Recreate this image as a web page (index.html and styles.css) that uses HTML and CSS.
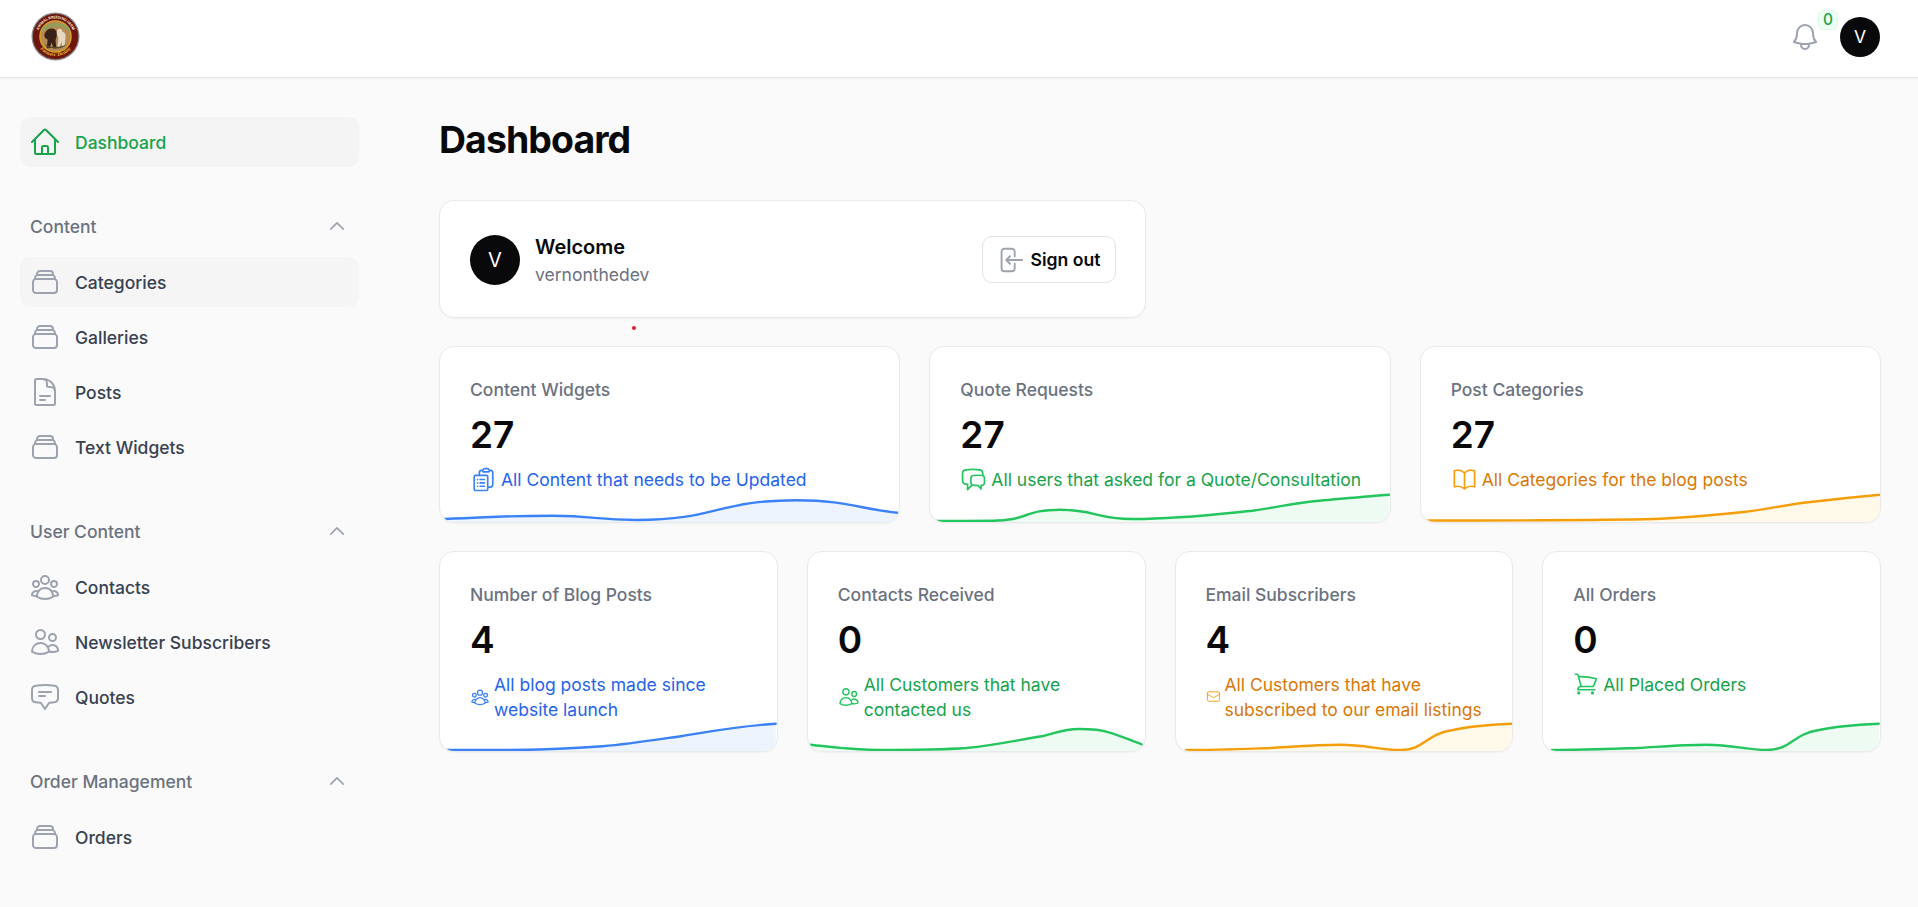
FILE: index.html
```html
<!DOCTYPE html>
<html lang="en">
<head>
<meta charset="utf-8" />
<meta name="viewport" content="width=device-width, initial-scale=1" />
<title>Dashboard</title>
<link rel="stylesheet" href="styles.css">
</head>
<body>
<svg class="sprite" aria-hidden="true">
<symbol id="i-home" viewBox="0 0 24 24"><path d="m2.25 12 8.954-8.955c.44-.439 1.152-.439 1.591 0L21.75 12M4.5 9.75v10.125c0 .621.504 1.125 1.125 1.125H9.75v-4.875c0-.621.504-1.125 1.125-1.125h2.25c.621 0 1.125.504 1.125 1.125V21h4.125c.621 0 1.125-.504 1.125-1.125V9.75M8.25 21h8.25"/></symbol>
<symbol id="i-stack" viewBox="0 0 24 24"><path d="M6 6.878V6a2.25 2.25 0 0 1 2.25-2.25h7.5A2.25 2.25 0 0 1 18 6v.878m-12 0c.235-.083.487-.128.75-.128h10.5c.263 0 .515.045.75.128m-12 0A2.25 2.25 0 0 0 4.5 9v.878m13.5-3A2.25 2.25 0 0 1 19.5 9v.878m0 0a2.246 2.246 0 0 0-.75-.128H5.25c-.263 0-.515.045-.75.128m15 0A2.25 2.25 0 0 1 21 12v6a2.25 2.25 0 0 1-2.25 2.25H5.25A2.25 2.25 0 0 1 3 18v-6c0-.98.626-1.813 1.5-2.122"/></symbol>
<symbol id="i-doc" viewBox="0 0 24 24"><path d="M19.5 14.25v-2.625a3.375 3.375 0 0 0-3.375-3.375h-1.5A1.125 1.125 0 0 1 13.5 7.125v-1.5a3.375 3.375 0 0 0-3.375-3.375H8.25m0 12.75h7.5m-7.5 3H12M10.5 2.25H5.625c-.621 0-1.125.504-1.125 1.125v17.25c0 .621.504 1.125 1.125 1.125h12.75c.621 0 1.125-.504 1.125-1.125V11.25a9 9 0 0 0-9-9Z"/></symbol>
<symbol id="i-group" viewBox="0 0 24 24"><path d="M18 18.72a9.094 9.094 0 0 0 3.741-.479 3 3 0 0 0-4.682-2.72m.94 3.198.001.031c0 .225-.012.447-.037.666A11.944 11.944 0 0 1 12 21c-2.17 0-4.207-.576-5.963-1.584A6.062 6.062 0 0 1 6 18.719m12 0a5.971 5.971 0 0 0-.941-3.197m0 0A5.995 5.995 0 0 0 12 12.75a5.995 5.995 0 0 0-5.058 2.772m0 0a3 3 0 0 0-4.681 2.72 8.986 8.986 0 0 0 3.74.477m.94-3.197a5.971 5.971 0 0 0-.94 3.197M15 6.75a3 3 0 1 1-6 0 3 3 0 0 1 6 0Zm6 3a2.25 2.25 0 1 1-4.5 0 2.25 2.25 0 0 1 4.5 0Zm-13.5 0a2.25 2.25 0 1 1-4.5 0 2.25 2.25 0 0 1 4.5 0Z"/></symbol>
<symbol id="i-users" viewBox="0 0 24 24"><path d="M15 19.128a9.38 9.38 0 0 0 2.625.372 9.337 9.337 0 0 0 4.121-.952 4.125 4.125 0 0 0-7.533-2.493M15 19.128v-.003c0-1.113-.285-2.16-.786-3.07M15 19.128v.106A12.318 12.318 0 0 1 8.624 21c-2.331 0-4.512-.645-6.374-1.766l-.001-.109a6.375 6.375 0 0 1 11.964-3.07M12 6.375a3.375 3.375 0 1 1-6.75 0 3.375 3.375 0 0 1 6.75 0Zm8.25 2.25a2.625 2.625 0 1 1-5.25 0 2.625 2.625 0 0 1 5.25 0Z"/></symbol>
<symbol id="i-quote" viewBox="0 0 24 24"><path d="M7.5 8.25h9m-9 3H12m-9.75 1.51c0 1.6 1.123 2.994 2.707 3.227 1.129.166 2.27.293 3.423.379.35.026.67.21.865.501L12 21l2.755-4.133a1.14 1.14 0 0 1 .865-.501 48.172 48.172 0 0 0 3.423-.379c1.584-.233 2.707-1.626 2.707-3.228V6.741c0-1.602-1.123-2.995-2.707-3.228A48.394 48.394 0 0 0 12 3c-2.392 0-4.744.175-7.043.513C3.373 3.746 2.25 5.14 2.25 6.741v6.018Z"/></symbol>
<symbol id="i-bell" viewBox="0 0 24 24"><path d="M14.857 17.082a23.848 23.848 0 0 0 5.454-1.31A8.967 8.967 0 0 1 18 9.75V9A6 6 0 0 0 6 9v.75a8.967 8.967 0 0 1-2.312 6.022c1.733.64 3.56 1.085 5.455 1.31m5.714 0a24.255 24.255 0 0 1-5.714 0m5.714 0a3 3 0 1 1-5.714 0"/></symbol>
<symbol id="i-signout" viewBox="0 0 24 24"><path d="M15.75 9V5.25A2.25 2.25 0 0 0 13.5 3h-6a2.25 2.25 0 0 0-2.25 2.25v13.5A2.25 2.25 0 0 0 7.5 21h6a2.25 2.25 0 0 0 2.25-2.25V15M12 9l-3 3m0 0 3 3m-3-3h12.75"/></symbol>
<symbol id="i-clipboard" viewBox="0 0 24 24"><path d="M9 12h3.75M9 15h3.75M9 18h3.75m3 .75H18a2.25 2.25 0 0 0 2.25-2.25V6.108c0-1.135-.845-2.098-1.976-2.192a48.424 48.424 0 0 0-1.123-.08m-5.801 0c-.065.21-.1.433-.1.664 0 .414.336.75.75.75h4.5a.75.75 0 0 0 .75-.75 2.25 2.25 0 0 0-.1-.664m-5.8 0A2.251 2.251 0 0 1 13.5 2.25H15c1.012 0 1.867.668 2.15 1.586m-5.8 0c-.376.023-.75.05-1.124.08C9.095 4.01 8.25 4.973 8.25 6.108V8.25m0 0H4.875c-.621 0-1.125.504-1.125 1.125v11.25c0 .621.504 1.125 1.125 1.125h9.75c.621 0 1.125-.504 1.125-1.125V9.375c0-.621-.504-1.125-1.125-1.125H8.25ZM6.75 12h.008v.008H6.75V12Zm0 3h.008v.008H6.75V15Zm0 3h.008v.008H6.75V18Z"/></symbol>
<symbol id="i-chat" viewBox="0 0 24 24"><path d="M20.25 8.511c.884.284 1.5 1.128 1.5 2.097v4.286c0 1.136-.847 2.1-1.98 2.193-.34.027-.68.052-1.02.072v3.091l-3-3c-1.354 0-2.694-.055-4.02-.163a2.115 2.115 0 0 1-.825-.242m9.345-8.334a2.126 2.126 0 0 0-.476-.095 48.64 48.64 0 0 0-8.048 0c-1.131.094-1.976 1.057-1.976 2.192v4.286c0 .837.46 1.58 1.155 1.951m9.345-8.334V6.637c0-1.621-1.152-3.026-2.76-3.235A48.455 48.455 0 0 0 11.25 3c-2.115 0-4.198.137-6.24.402-1.608.209-2.76 1.614-2.76 3.235v6.226c0 1.621 1.152 3.026 2.76 3.235.577.075 1.157.14 1.74.194V21l4.155-4.155"/></symbol>
<symbol id="i-book" viewBox="0 0 24 24"><path d="M12 6.042A8.967 8.967 0 0 0 6 3.75c-1.052 0-2.062.18-3 .512v14.25A8.987 8.987 0 0 1 6 18c2.305 0 4.408.867 6 2.292m0-14.25a8.966 8.966 0 0 1 6-2.292c1.052 0 2.062.18 3 .512v14.25A8.987 8.987 0 0 0 18 18a8.967 8.967 0 0 0-6 2.292m0-14.25v14.25"/></symbol>
<symbol id="i-mail" viewBox="0 0 24 24"><path d="M21.75 6.75v10.5a2.25 2.25 0 0 1-2.25 2.25h-15a2.25 2.25 0 0 1-2.25-2.25V6.75m19.5 0A2.25 2.25 0 0 0 19.5 4.5h-15a2.25 2.25 0 0 0-2.25 2.25m19.5 0v.243a2.25 2.25 0 0 1-1.07 1.916l-7.5 4.615a2.25 2.25 0 0 1-2.36 0L3.32 8.91a2.25 2.25 0 0 1-1.07-1.916V6.75"/></symbol>
<symbol id="i-cart" viewBox="0 0 24 24"><path d="M2.25 3h1.386c.51 0 .955.343 1.087.835l.383 1.437M7.5 14.25a3 3 0 0 0-3 3h15.75m-12.75-3h11.218c1.121-2.3 2.1-4.684 2.924-7.138a60.114 60.114 0 0 0-16.536-1.84M7.5 14.25 5.106 5.272M6 20.25a.75.75 0 1 1-1.5 0 .75.75 0 0 1 1.5 0Zm12.75 0a.75.75 0 1 1-1.5 0 .75.75 0 0 1 1.5 0Z"/></symbol>
<symbol id="i-chevron" viewBox="0 0 24 24"><path d="m4.5 15.75 7.5-7.5 7.5 7.5"/></symbol>
</svg>

<header class="topbar">
  <svg class="logo" viewBox="0 0 50 50" role="img" aria-label="Logo">
    <defs>
      <path id="logo-top" d="M6.5 25a18.5 18.5 0 0 1 37 0"/>
      <path id="logo-bottom" d="M5 25a20 20 0 0 0 40 0"/>
    </defs>
    <circle cx="25" cy="25" r="24.5" fill="#8a8a8a"/>
    <circle cx="25" cy="25" r="23.2" fill="#6e150f"/>
    <circle cx="25" cy="25" r="16.6" fill="#d9a520"/>
    <circle cx="25" cy="25" r="15.2" fill="#b58a55"/>
    <path d="M11 21c5-7 22-9 28-1v-4c-5-6-22-6-28 1Z" fill="#8fa05c"/>
    <path d="M14 22c2-6 10-7 12-2 1 3 0 6-1 9l1 8h-3l-2-6-2 6h-3l1-9c-3-1-4-3-3-6Z" fill="#3b2218"/>
    <path d="M27 18c3-2 5 0 5 2 3 1 4 4 3 8l-1 8h-2l-1-6-2 7h-2l1-11c-2-2-2-6-1-8Z" fill="#e6d8c0"/>
    <path d="M14 33c5 3 16 4 22 0-3 6-19 6-22 0Z" fill="#5a4a2e"/>
    <text class="logo-top-text"><textPath href="#logo-top" startOffset="50%" text-anchor="middle">ANIMAL BREEDING FARM</textPath></text>
    <text class="logo-bottom-text"><textPath href="#logo-bottom" startOffset="50%" text-anchor="middle">Farmers' Destiny</textPath></text>
  </svg>
  <div class="topbar-actions">
    <div class="bell">
      <svg class="icon bell-icon"><use href="#i-bell"/></svg>
      <span class="bell-badge">0</span>
    </div>
    <span class="avatar">V</span>
  </div>
</header>

<div class="layout">
  <aside class="sidebar">
    <a class="nav-item active"><svg class="icon nav-icon"><use href="#i-home"/></svg>Dashboard</a>

    <section class="nav-group">
      <div class="nav-title">Content<svg class="icon chevron"><use href="#i-chevron"/></svg></div>
      <a class="nav-item hover"><svg class="icon nav-icon"><use href="#i-stack"/></svg>Categories</a>
      <a class="nav-item"><svg class="icon nav-icon"><use href="#i-stack"/></svg>Galleries</a>
      <a class="nav-item"><svg class="icon nav-icon"><use href="#i-doc"/></svg>Posts</a>
      <a class="nav-item"><svg class="icon nav-icon"><use href="#i-stack"/></svg>Text Widgets</a>
    </section>

    <section class="nav-group">
      <div class="nav-title">User Content<svg class="icon chevron"><use href="#i-chevron"/></svg></div>
      <a class="nav-item"><svg class="icon nav-icon"><use href="#i-group"/></svg>Contacts</a>
      <a class="nav-item"><svg class="icon nav-icon"><use href="#i-users"/></svg>Newsletter Subscribers</a>
      <a class="nav-item"><svg class="icon nav-icon"><use href="#i-quote"/></svg>Quotes</a>
    </section>

    <section class="nav-group">
      <div class="nav-title">Order Management<svg class="icon chevron"><use href="#i-chevron"/></svg></div>
      <a class="nav-item"><svg class="icon nav-icon"><use href="#i-stack"/></svg>Orders</a>
    </section>
  </aside>

  <main class="content">
    <h1>Dashboard</h1>

    <div class="widgets">
      <div class="grid grid-2">
        <div class="card welcome">
          <span class="avatar avatar-lg">V</span>
          <div class="welcome-text">
            <div class="welcome-title">Welcome</div>
            <div class="welcome-user">vernonthedev</div>
          </div>
          <button class="signout" type="button"><svg class="icon signout-icon"><use href="#i-signout"/></svg>Sign out</button>
        </div>
      </div>

      <div class="grid grid-3">
        <div class="card stat blue">
          <div class="stat-label">Content Widgets</div>
          <div class="stat-value">27</div>
          <div class="stat-desc"><svg class="icon desc-icon"><use href="#i-clipboard"/></svg><span>All Content that needs to be Updated</span></div>
          <svg class="spark" viewBox="0 0 460 40" preserveAspectRatio="none">
            <path class="spark-fill" d="M5 37C59 35 59 33.7 113 33.7C155 33.7 155 38 197 38C277 38 277 18.3 357 18.3C407 18.3 420 27 458 30.7V40H5Z"/>
            <path class="spark-line" d="M5 37C59 35 59 33.7 113 33.7C155 33.7 155 38 197 38C277 38 277 18.3 357 18.3C407 18.3 420 27 458 30.7"/>
          </svg>
        </div>
        <div class="card stat green">
          <div class="stat-label">Quote Requests</div>
          <div class="stat-value">27</div>
          <div class="stat-desc"><svg class="icon desc-icon"><use href="#i-chat"/></svg><span>All users that asked for a Quote/Consultation</span></div>
          <svg class="spark" viewBox="0 0 460 40" preserveAspectRatio="none">
            <path class="spark-fill" d="M7 39C30 39 40 38.7 63 38.7C97 38.7 95 27.7 130 27.7C167 27.7 165 37 203 37C250 37 290 32 323 28.7C350 25 365 20.7 390 18.7C415 16.5 440 14 460 12.7V40H7Z"/>
            <path class="spark-line" d="M7 39C30 39 40 38.7 63 38.7C97 38.7 95 27.7 130 27.7C167 27.7 165 37 203 37C250 37 290 32 323 28.7C350 25 365 20.7 390 18.7C415 16.5 440 14 460 12.7"/>
          </svg>
        </div>
        <div class="card stat amber">
          <div class="stat-label">Post Categories</div>
          <div class="stat-value">27</div>
          <div class="stat-desc"><svg class="icon desc-icon"><use href="#i-book"/></svg><span>All Categories for the blog posts</span></div>
          <svg class="spark" viewBox="0 0 460 40" preserveAspectRatio="none">
            <path class="spark-fill" d="M7 38.5C80 38.5 150 38.5 223 37.3C260 36.5 295 33 323 30C350 27 365 22.5 390 20C415 17 440 14.5 460 12.7V40H7Z"/>
            <path class="spark-line" d="M7 38.5C80 38.5 150 38.5 223 37.3C260 36.5 295 33 323 30C350 27 365 22.5 390 20C415 17 440 14.5 460 12.7"/>
          </svg>
        </div>
      </div>

      <div class="grid grid-4">
        <div class="card stat blue">
          <div class="stat-label">Number of Blog Posts</div>
          <div class="stat-value">4</div>
          <div class="stat-desc"><svg class="icon desc-icon desc-icon-group"><use href="#i-group"/></svg><span>All blog posts made since website launch</span></div>
          <svg class="spark" viewBox="0 0 338 40" preserveAspectRatio="none">
            <path class="spark-fill" d="M7 39C40 39 60 39 90 38.7C120 38.3 140 37 163 35.3C190 33 215 29 243 25C270 20.5 300 15 337 12.7V40H7Z"/>
            <path class="spark-line" d="M7 39C40 39 60 39 90 38.7C120 38.3 140 37 163 35.3C190 33 215 29 243 25C270 20.5 300 15 337 12.7"/>
          </svg>
        </div>
        <div class="card stat green">
          <div class="stat-label">Contacts Received</div>
          <div class="stat-value">0</div>
          <div class="stat-desc"><svg class="icon desc-icon desc-icon-users"><use href="#i-users"/></svg><span>All Customers that have contacted us</span></div>
          <svg class="spark" viewBox="0 0 338 40" preserveAspectRatio="none">
            <path class="spark-fill" d="M2 33.7C25 36 45 39 72 39C105 39 130 39 159 37C190 34 210 29 236 25C250 22 255 18 272 18C290 18 298 20 302 21.3C315 25 325 30 335 33.3V40H2Z"/>
            <path class="spark-line" d="M2 33.7C25 36 45 39 72 39C105 39 130 39 159 37C190 34 210 29 236 25C250 22 255 18 272 18C290 18 298 20 302 21.3C315 25 325 30 335 33.3"/>
          </svg>
        </div>
        <div class="card stat amber">
          <div class="stat-label">Email Subscribers</div>
          <div class="stat-value">4</div>
          <div class="stat-desc"><svg class="icon desc-icon desc-icon-mail"><use href="#i-mail"/></svg><span>All Customers that have subscribed to our email listings</span></div>
          <svg class="spark" viewBox="0 0 338 40" preserveAspectRatio="none">
            <path class="spark-fill" d="M10 39C40 39 65 38 95 37C120 35.5 140 33.7 165 33.7C190 33.7 205 39 225 39C250 39 250 23 278 19C295 15 315 13.7 337 12.7V40H10Z"/>
            <path class="spark-line" d="M10 39C40 39 65 38 95 37C120 35.5 140 33.7 165 33.7C190 33.7 205 39 225 39C250 39 250 23 278 19C295 15 315 13.7 337 12.7"/>
          </svg>
        </div>
        <div class="card stat green">
          <div class="stat-label">All Orders</div>
          <div class="stat-value">0</div>
          <div class="stat-desc"><svg class="icon desc-icon desc-icon-cart"><use href="#i-cart"/></svg><span>All Placed Orders</span></div>
          <svg class="spark" viewBox="0 0 338 40" preserveAspectRatio="none">
            <path class="spark-fill" d="M9 39C40 39 65 38 94 37C120 35.5 140 33.7 164 33.7C190 33.7 205 39 224 39C250 39 250 23 277 19C295 15 315 13.7 337 12.7V40H9Z"/>
            <path class="spark-line" d="M9 39C40 39 65 38 94 37C120 35.5 140 33.7 164 33.7C190 33.7 205 39 224 39C250 39 250 23 277 19C295 15 315 13.7 337 12.7"/>
          </svg>
        </div>
      </div>
    </div>
  </main>
</div>

<span class="stray-dot"></span>
</body>
</html>
```

FILE: styles.css
```css
:root {
  --color-bg: #fafafa;
  --color-text: #374151;
  --color-muted: #6b7280;
  --color-icon: #9ca3af;
  --color-dark: #09090b;
  --color-border: #e9eaec;
  --color-hover: #f4f4f5;
  --color-green: #16a34a;
}
* {
  box-sizing: border-box;
}
body {
  position: relative;
  margin: 0;
  min-height: 100vh;
  font-family: Inter, "Liberation Sans", sans-serif;
  font-size: 17.5px;
  background-color: var(--color-bg);
  color: var(--color-text);
}
.sprite {
  position: absolute;
  width: 0;
  height: 0;
}
.icon {
  fill: none;
  stroke: currentColor;
  stroke-width: 1.5;
  stroke-linecap: round;
  stroke-linejoin: round;
  flex-shrink: 0;
}

/* top bar */
.topbar {
  display: flex;
  align-items: center;
  justify-content: space-between;
  height: 78px;
  padding: 0 38px 0 31px;
  background: #fff;
  border-bottom: 1px solid #e5e7eb;
  box-shadow: 0 1px 2px rgba(0, 0, 0, 0.04);
}
.logo {
  width: 49px;
  height: 49px;
  margin-top: -5px;
}
.logo-top-text {
  font-size: 3.6px;
  font-weight: 700;
  fill: #f3e6c8;
}
.logo-bottom-text {
  font-family: "Liberation Serif", serif;
  font-size: 5px;
  font-weight: 700;
  font-style: italic;
  fill: #f2c531;
}
.topbar-actions {
  display: flex;
  align-items: center;
  margin-top: -4px;
}
.bell {
  position: relative;
  width: 32px;
  height: 32px;
  margin-right: 19px;
}
.bell-icon {
  display: block;
  width: 32px;
  height: 32px;
  color: var(--color-icon);
}
.bell-badge {
  position: absolute;
  top: -11px;
  left: 29px;
  width: 20px;
  height: 20px;
  border-radius: 6px;
  background: #f0fdf4;
  box-shadow: inset 0 0 0 1px #dcfce7;
  color: var(--color-green);
  font-size: 15.4px;
  font-weight: 500;
  line-height: 20px;
  text-align: center;
}
.avatar {
  display: flex;
  align-items: center;
  justify-content: center;
  width: 40px;
  height: 40px;
  border-radius: 50%;
  background: var(--color-dark);
  color: #fff;
  font-size: 17.5px;
}
.avatar-lg {
  width: 50px;
  height: 50px;
  font-size: 20px;
  flex-shrink: 0;
}

/* layout */
.layout {
  display: flex;
}
.sidebar {
  width: 379px;
  flex-shrink: 0;
  padding: 39px 20px 0;
}
.nav-item {
  display: flex;
  align-items: center;
  gap: 14px;
  height: 50px;
  padding: 0 9px;
  margin-bottom: 5px;
  border-radius: 10px;
  font-weight: 500;
  color: var(--color-text);
}
.nav-item.active {
  background: var(--color-hover);
  color: var(--color-green);
}
.nav-item.hover {
  background: #f5f5f6;
}
.nav-icon {
  width: 32px;
  height: 32px;
  color: var(--color-icon);
}
.active .nav-icon {
  color: var(--color-green);
}
.nav-group {
  margin-top: 48px;
}
.nav-title {
  display: flex;
  align-items: center;
  justify-content: space-between;
  height: 24px;
  padding: 0 12px 2px 10px;
  margin-bottom: 18px;
  font-weight: 500;
  color: var(--color-muted);
}
.chevron {
  width: 20px;
  height: 20px;
  color: var(--color-icon);
  stroke-width: 2;
}

/* main content */
.content {
  flex: 1;
  min-width: 0;
  padding: 40px 37px 0 60px;
}
h1 {
  margin: 0 0 38px;
  font-size: 37.4px;
  font-weight: 700;
  line-height: 44px;
  letter-spacing: -0.9px;
  color: var(--color-dark);
}
.widgets {
  display: flex;
  flex-direction: column;
  gap: 28px;
}
.grid {
  display: grid;
  gap: 29px;
}
.grid-2 {
  grid-template-columns: repeat(2, 1fr);
}
.grid-3 {
  grid-template-columns: repeat(3, 1fr);
}
.grid-4 {
  grid-template-columns: repeat(4, 1fr);
}
.card {
  background: #fff;
  border: 1px solid var(--color-border);
  border-radius: 15px;
  box-shadow: 0 1px 2px rgba(0, 0, 0, 0.04);
}
.welcome {
  display: flex;
  align-items: center;
  gap: 15px;
  padding: 31px 29px 30px 30px;
}
.welcome-text {
  flex: 1;
}
.welcome-title {
  font-size: 20px;
  font-weight: 600;
  line-height: 30px;
  color: var(--color-dark);
}
.welcome-user {
  line-height: 25px;
  color: var(--color-muted);
}
.signout {
  display: flex;
  align-items: center;
  gap: 6px;
  height: 47px;
  padding: 0 14px 0 12px;
  background: #fff;
  border: 1px solid #e1e3e6;
  border-radius: 10px;
  font-family: inherit;
  font-size: 17.6px;
  font-weight: 600;
  color: var(--color-dark);
}
.signout-icon {
  width: 30px;
  height: 30px;
  color: var(--color-icon);
}

/* stat cards */
.stat {
  position: relative;
  overflow: hidden;
  padding: 30px 24px 29.5px 30px;
}
.stat-label {
  font-weight: 500;
  line-height: 25px;
  color: var(--color-muted);
}
.stat-value {
  margin: 10px 0;
  font-size: 37px;
  font-weight: 600;
  line-height: 45px;
  color: var(--color-dark);
}
.stat-desc {
  display: flex;
  align-items: center;
  gap: 4px;
  line-height: 25px;
}
.desc-icon {
  width: 27px;
  height: 27px;
  margin: -1px 0;
}
.desc-icon-group {
  width: 20px;
  height: 20px;
}
.desc-icon-users {
  width: 22px;
  height: 22px;
}
.desc-icon-mail {
  width: 15px;
  height: 15px;
}
.desc-icon-cart {
  width: 26px;
  height: 26px;
}
.blue .stat-desc {
  color: #2563eb;
}
.blue .desc-icon,
.blue .spark-line {
  color: #3b82f6;
  stroke: #3b82f6;
}
.blue .spark-fill {
  fill: #edf4fe;
}
.green .stat-desc {
  color: var(--color-green);
}
.green .desc-icon,
.green .spark-line {
  color: #22c55e;
  stroke: #22c55e;
}
.green .spark-fill {
  fill: #eefbf2;
}
.amber .stat-desc {
  color: #d97706;
}
.amber .desc-icon,
.amber .spark-line {
  color: #f59e0b;
  stroke: #f59e0b;
}
.amber .spark-fill {
  fill: #fef9e8;
}
.spark {
  position: absolute;
  left: 0;
  right: 0;
  bottom: 0;
  width: 100%;
  height: 40px;
}
.spark-line {
  fill: none;
  stroke-width: 2.4;
  stroke-linecap: round;
}
.stray-dot {
  position: absolute;
  left: 632px;
  top: 326px;
  width: 4px;
  height: 4px;
  border-radius: 50%;
  background: #e11d2e;
}
```
